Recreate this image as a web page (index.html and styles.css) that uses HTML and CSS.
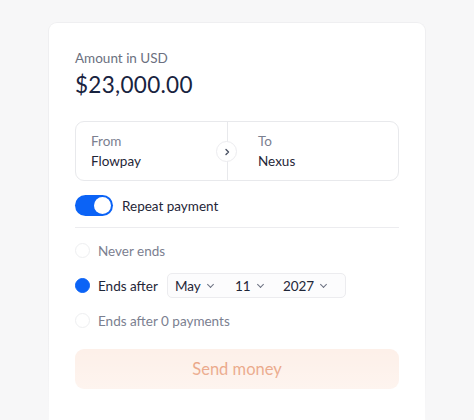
FILE: index.html
```html
<!DOCTYPE html>
<html lang="en">
<head>
  <meta charset="UTF-8">
  <title>Send money</title>
  <link rel="stylesheet" href="styles.css">
</head>
<body>

  <div class="card">
    <div class="label">Amount in USD</div>
    <div class="amount">$23,000.00</div>

    <div class="route">
      <div class="side from">
        <div class="muted">From</div>
        <div class="name">Flowpay</div>
      </div>
      <div class="side to">
        <div class="muted">To</div>
        <div class="name">Nexus</div>
      </div>
      <div class="arrow">
        <svg width="8" height="8" viewBox="0 0 8 8"><path d="M3 1.5 L5.5 4 L3 6.5" fill="none" stroke="#4b5263" stroke-width="1.4" stroke-linecap="round" stroke-linejoin="round"/></svg>
      </div>
    </div>

    <div class="repeat">
      <span class="toggle"><span class="knob"></span></span>
      <span>Repeat payment</span>
    </div>

    <div class="options">
      <div class="option">
        <span class="radio"></span>
        <span class="muted">Never ends</span>
      </div>
      <div class="option">
        <span class="radio on"></span>
        <span class="strong">Ends after</span>
        <div class="date">
          <span class="pick month">May <i class="chev"></i></span>
          <span class="pick day">11 <i class="chev"></i></span>
          <span class="pick year">2027 <i class="chev"></i></span>
        </div>
      </div>
      <div class="option">
        <span class="radio"></span>
        <span class="muted">Ends after 0 payments</span>
      </div>
    </div>

    <button class="send">Send money</button>
    <div class="fade"></div>
  </div>

</body>
</html>
```

FILE: styles.css
```css
html, body {
  height: 100%;
}

body {
  margin: 0;
  background-color: #f7f7f8;
  font-family: 'Lato', sans-serif;
  color: #1c2640;
  padding: 22px 0 0 48px;
  box-sizing: border-box;
  overflow: hidden;
}

.card {
  position: relative;
  width: 378px;
  height: 100%;
  box-sizing: border-box;
  background-color: #fff;
  border: 1px solid #efeff1;
  border-bottom: none;
  border-radius: 9px 9px 0 0;
  padding: 27px 26px 0 26px;
}

.label {
  font-size: 13.5px;
  color: #6b7080;
}

.amount {
  font-size: 22.5px;
  margin-top: 5px;
  letter-spacing: 0.3px;
  color: #18233f;
}

.route {
  position: relative;
  display: flex;
  margin-top: 23px;
  height: 58px;
  border: 1px solid #e8e9ec;
  border-radius: 9px;
}

.side {
  padding: 11px 15px;
  font-size: 13.5px;
}

.from {
  width: 151px;
  box-sizing: border-box;
}

.to {
  flex: 1;
  border-left: 1px solid #e8e9ec;
  padding-left: 30px;
}

.muted {
  color: #7b8090;
}

.name {
  margin-top: 4px;
  color: #1f2638;
}

.arrow {
  position: absolute;
  left: 140px;
  top: 19px;
  width: 19px;
  height: 19px;
  border-radius: 50%;
  background-color: #fff;
  border: 1px solid #ececef;
  display: flex;
  align-items: center;
  justify-content: center;
}

.repeat {
  display: flex;
  align-items: center;
  gap: 9px;
  margin-top: 14px;
  padding-bottom: 11px;
  border-bottom: 1px solid #ececef;
  font-size: 13.5px;
  color: #1f2638;
}

.toggle {
  width: 38px;
  height: 21px;
  border-radius: 11px;
  background-color: #0b63f6;
  position: relative;
}

.knob {
  position: absolute;
  right: 2px;
  top: 2px;
  width: 17px;
  height: 17px;
  border-radius: 50%;
  background-color: #fff;
}

.options {
  display: flex;
  flex-direction: column;
  gap: 10px;
  margin-top: 10px;
}

.option {
  display: flex;
  align-items: center;
  gap: 8px;
  height: 25px;
  font-size: 13.5px;
}

.radio {
  width: 15px;
  height: 15px;
  border-radius: 50%;
  border: 1px solid #eeeff1;
  box-sizing: border-box;
}

.radio.on {
  background-color: #0b63f6;
  border-color: #0b63f6;
}

.strong {
  color: #1f2638;
}

.date {
  display: flex;
  align-items: center;
  margin-left: 1px;
  width: 179px;
  height: 25px;
  box-sizing: border-box;
  border: 1px solid #ececef;
  border-radius: 5px;
  background-color: #fcfcfd;
  padding-left: 7px;
  color: #1f2638;
}

.pick {
  display: flex;
  align-items: center;
  gap: 4px;
}

.month { width: 60px; }
.day { width: 48px; }

.chev {
  width: 4px;
  height: 4px;
  border-right: 1px solid #6b7080;
  border-bottom: 1px solid #6b7080;
  transform: rotate(45deg);
  margin: -3px 0 0 3px;
}

.send {
  display: block;
  width: 100%;
  margin-top: 16px;
  height: 40px;
  border: none;
  border-radius: 9px;
  background-color: #fdeee6;
  color: #e5916a;
  font-family: inherit;
  font-size: 16.5px;
}

.fade {
  position: absolute;
  left: -1px;
  right: -1px;
  bottom: 0;
  height: 90px;
  background: linear-gradient(rgba(255,255,255,0), rgba(255,255,255,0.55));
}
```
